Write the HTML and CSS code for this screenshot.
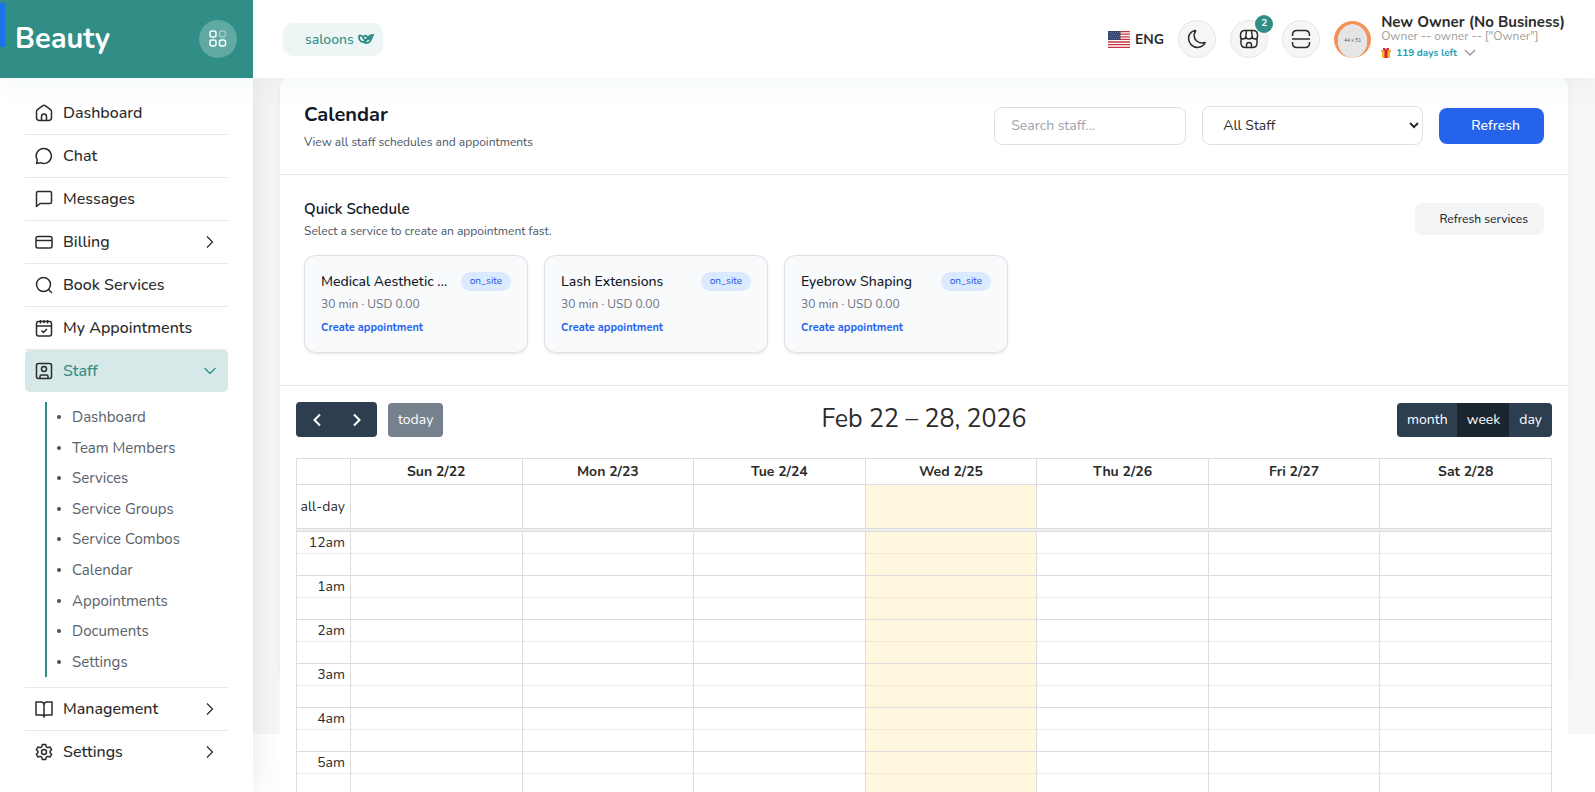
FILE: index.html
```html
<!DOCTYPE html>
<html lang="en">
<head>
    <meta charset="UTF-8">
    <meta name="viewport" content="width=device-width, initial-scale=1.0">
    <title>Calendar</title>
    <link rel="stylesheet" href="styles.css">
</head>
<body>
    <div class="loader-bar"></div>

    <!-- Header -->
    <header class="header">
        <div class="brand">
            <a href="#" class="brand-name">Beauty</a>
            <button type="button" class="toggle-btn" aria-label="Toggle sidebar">
                <svg width="20" height="20" viewBox="0 0 20 20" fill="none" stroke="#fff" stroke-width="1.5">
                    <rect x="2" y="2" width="6" height="6" rx="2"/>
                    <rect x="11.500" y="2" width="6" height="6" rx="2" opacity="0.4"/>
                    <rect x="2" y="11" width="6" height="6" rx="2"/>
                    <rect x="11.500" y="11" width="6" height="6" rx="2"/>
                </svg>
            </button>
        </div>
        <div class="topbar">
            <a href="#" class="saloons">saloons
                <svg width="16" height="12" viewBox="0 0 16 12" fill="none" stroke="#308e87">
                    <path d="M1 2.500c1.500-.5 3 0 4 2l3 4M1 2.500C.8 6 2 9 5 9c2.500 0 3.500-2 4.500-4" stroke-width="1.800"/>
                    <path d="M5.500 3.500c1.500-1 3-.8 4 .5M6 9c1.500 1.500 5 1.500 6.500-1.500L15 2c-2 0-4 .8-5.500 3.500L7 9" stroke-width="1.800"/>
                    <path d="M10 6l4-3.500-2 4.500z" fill="#308e87"/>
                </svg>
            </a>
            <div class="topbar-right">
                <button type="button" class="lang">
                    <svg width="22" height="17" viewBox="0 0 22 17">
                        <rect width="22" height="17" fill="#fff"/>
                        <path d="M0 .6h22M0 3.200h22M0 5.800h22M0 8.400h22M0 11h22M0 13.600h22M0 16.300h22" stroke="#c8343f" stroke-width="1.300"/>
                        <rect width="12.500" height="9" fill="#34446f"/>
                        <path d="M1 1.500h11M2 3.500h10M1 5.500h11M2 7.500h10" stroke="#7f8cb5" stroke-width=".6" stroke-dasharray="1 1"/>
                    </svg>
                    ENG
                </button>
                <button type="button" class="icon-btn" aria-label="Dark mode">
                    <svg width="20" height="20" viewBox="0 0 20 20"><path d="M8 1.500C3.800 2.600 1.500 6 1.600 9.800 1.800 14.600 5.600 18.400 10.400 18.400c3.400 0 6.300-1.900 7.800-4.700-.8-.5-1.900.2-3.400.2-4.300 0-7.700-3.400-7.700-7.700 0-1.700.9-3.100 1.500-4.100.2-.4-.1-.7-.6-.6z"/></svg>
                </button>
                <button type="button" class="icon-btn" aria-label="Shops">
                    <svg width="20" height="20" viewBox="0 0 20 20"><path d="M7.500 1.500h5M5.500 1.500C3 1.500 1.800 3 1.500 5.500v2c0 1.500 1 2.500 2.500 2.500s2.800-1 2.800-2.500l.7-6h-2M7.500 1.500l-.7 6c0 1.500 1.400 2.500 3.200 2.500s3.200-1 3.200-2.500l-.7-6M12.500 1.500h2c2.500 0 3.700 1.500 4 4v2c0 1.500-1 2.500-2.500 2.500s-2.800-1-2.800-2.500M2 10v4c0 3 1.500 4.500 4.500 4.500h7c3 0 4.500-1.500 4.500-4.500v-4M7.500 18v-2c0-1.500 1-2.500 2.500-2.500s2.500 1 2.500 2.500v2"/></svg>
                    <span class="badge">2</span>
                </button>
                <button type="button" class="icon-btn" aria-label="Full screen">
                    <svg width="20" height="20" viewBox="0 0 20 20"><path d="M1.500 7V6c0-3 1.500-4.500 4.500-4.500h8c3 0 4.500 1.500 4.500 4.500v1M1.500 13v1c0 3 1.500 4.500 4.500 4.500h8c3 0 4.500-1.500 4.500-4.500v-1M1 10h18"/></svg>
                </button>
                <div class="profile">
                    <span class="avatar">44 x 51</span>
                    <div class="profile-info">
                        <div class="profile-name">New Owner (No Business)</div>
                        <div class="profile-role">Owner -- owner -- ["Owner"]</div>
                        <div class="profile-trial">
                            <svg width="10" height="10" viewBox="0 0 10 10">
                                <path d="M1 3h8v7H1z" fill="#f5b92c"/>
                                <path d="M0 2h10v2H0z" fill="#f0a52a"/>
                                <path d="M2 0h2l1 1.500L6 0h2v2H6.500v8h-3V2H2z" fill="#d4213d"/>
                            </svg>
                            119 days left
                            <svg class="caret" width="12" height="8" viewBox="0 0 12 8"><path d="M1 1l5 5 5-5" fill="none" stroke="#a19d9a" stroke-width="1.500"/></svg>
                        </div>
                    </div>
                </div>
            </div>
        </div>
    </header>

    <div class="page">
        <!-- Sidebar -->
        <nav class="sidebar">
            <ul class="menu">
                <li><a href="#"><svg viewBox="0 0 18 18"><path d="M1.500 7.500v6c0 2 1 3 3 3h9c2 0 3-1 3-3v-6c0-.8-.3-1.300-1-1.800l-5-3.900c-1-.8-2-.8-3 0l-5 3.900c-.7.500-1 1-1 1.800zM6.500 16.500v-4c0-1.500 1-2.500 2.500-2.500s2.500 1 2.500 2.500v4"/></svg>Dashboard</a></li>
                <li><a href="#"><svg viewBox="0 0 18 18"><path d="M9 1.500a7.500 7.500 0 1 1-3.500 14.200c-1.500.3-3 .8-4 .8.300-1 .8-2.500.6-4A7.500 7.500 0 0 1 9 1.500z"/></svg>Chat</a></li>
                <li><a href="#"><svg viewBox="0 0 18 18"><path d="M3 1.500h12c1 0 1.500.5 1.500 1.500v9c0 1-.5 1.500-1.500 1.500H5l-3.500 3V3c0-1 .5-1.500 1.500-1.500z"/></svg>Messages</a></li>
                <li><a href="#"><svg viewBox="0 0 18 18"><rect x="1" y="3.500" width="16" height="11.500" rx="2"/><path d="M1 7.500h16"/></svg>Billing<svg class="arrow" viewBox="0 0 18 18"><path d="M6 3.500L11.500 9 6 14.500"/></svg></a></li>
                <li><a href="#"><svg viewBox="0 0 18 18"><circle cx="8.500" cy="8.500" r="7"/><path d="M13.500 13.500l3.500 3.500"/></svg>Book Services</a></li>
                <li><a href="#"><svg viewBox="0 0 18 18"><rect x="1.500" y="2.500" width="15" height="14.500" rx="2"/><path d="M1.500 7h15M5.500 1v3.500M12.500 1v3.500M9 1v3M6.500 11.500l2 2 3.500-3.500"/></svg>My Appointments</a></li>
                <li class="open">
                    <a href="#" class="active"><svg viewBox="0 0 18 18"><rect x="1.500" y="1.500" width="15" height="15" rx="2"/><circle cx="9" cy="7" r="2.500"/><path d="M5 16v-1.500c0-1 .6-1.500 1.500-1.500h5c.9 0 1.500.5 1.500 1.500V16"/></svg>Staff<svg class="arrow" viewBox="0 0 18 18"><path d="M3.500 6L9 11.500 14.500 6"/></svg></a>
                    <ul class="submenu">
                        <li><a href="#">Dashboard</a></li>
                        <li><a href="#">Team Members</a></li>
                        <li><a href="#">Services</a></li>
                        <li><a href="#">Service Groups</a></li>
                        <li><a href="#">Service Combos</a></li>
                        <li><a href="#">Calendar</a></li>
                        <li><a href="#">Appointments</a></li>
                        <li><a href="#">Documents</a></li>
                        <li><a href="#">Settings</a></li>
                    </ul>
                </li>
                <li><a href="#"><svg viewBox="0 0 18 18"><path d="M1 2h5c2 0 3 1 3 3v12c0-1.500-1-2-2.500-2H1zM17 2h-5c-2 0-3 1-3 3v12c0-1.500 1-2 2.500-2H17z"/></svg>Management<svg class="arrow" viewBox="0 0 18 18"><path d="M6 3.500L11.500 9 6 14.500"/></svg></a></li>
                <li><a href="#"><svg viewBox="0 0 18 18"><path d="M7.300 1.500h3.400l.5 2.300 1.600.9 2.200-.8 1.700 2.900-1.700 1.500v1.400l1.700 1.500-1.700 2.900-2.200-.8-1.600.9-.5 2.300H7.300l-.5-2.300-1.600-.9-2.200.8-1.700-2.900L3 9.700V8.300L1.300 6.800 3 3.900l2.200.8 1.600-.9z"/><circle cx="9" cy="9" r="2.500"/></svg>Settings<svg class="arrow" viewBox="0 0 18 18"><path d="M6 3.500L11.500 9 6 14.500"/></svg></a></li>
            </ul>
        </nav>

        <!-- Content -->
        <main class="content">
            <div class="card">
                <div class="card-head">
                    <div>
                        <h1>Calendar</h1>
                        <p>View all staff schedules and appointments</p>
                    </div>
                    <form class="filters">
                        <input type="text" class="search" placeholder="Search staff..." aria-label="Search staff">
                        <select class="staff-select" aria-label="Staff">
                            <option>All Staff</option>
                        </select>
                        <button type="button" class="btn-primary">Refresh</button>
                    </form>
                </div>

                <section class="quick">
                    <div class="quick-head">
                        <div>
                            <h2>Quick Schedule</h2>
                            <p>Select a service to create an appointment fast.</p>
                        </div>
                        <button type="button" class="btn-light">Refresh services</button>
                    </div>
                    <div class="services">
                        <div class="service">
                            <div class="service-top"><h3>Medical Aesthetic ...</h3><span class="pill">on_site</span></div>
                            <p>30 min · USD 0.00</p>
                            <a href="#">Create appointment</a>
                        </div>
                        <div class="service">
                            <div class="service-top"><h3>Lash Extensions</h3><span class="pill">on_site</span></div>
                            <p>30 min · USD 0.00</p>
                            <a href="#">Create appointment</a>
                        </div>
                        <div class="service">
                            <div class="service-top"><h3>Eyebrow Shaping</h3><span class="pill">on_site</span></div>
                            <p>30 min · USD 0.00</p>
                            <a href="#">Create appointment</a>
                        </div>
                    </div>
                </section>

                <section class="calendar">
                    <div class="toolbar">
                        <div class="toolbar-left">
                            <div class="btn-group nav-group">
                                <button type="button" aria-label="Previous"><svg width="10" height="14" viewBox="0 0 10 14"><path d="M8 1.500L2.500 7 8 12.500"/></svg></button>
                                <button type="button" aria-label="Next"><svg width="10" height="14" viewBox="0 0 10 14"><path d="M2 1.500L7.500 7 2 12.500"/></svg></button>
                            </div>
                            <button type="button" class="btn-today" disabled>today</button>
                        </div>
                        <h2>Feb 22 – 28, 2026</h2>
                        <div class="toolbar-right">
                            <div class="btn-group">
                                <button type="button">month</button>
                                <button type="button" class="active">week</button>
                                <button type="button">day</button>
                            </div>
                        </div>
                    </div>

                    <table class="week">
                        <colgroup>
                            <col class="axis"><col><col><col><col class="today"><col><col><col>
                        </colgroup>
                        <thead>
                            <tr><th></th><th>Sun 2/22</th><th>Mon 2/23</th><th>Tue 2/24</th><th>Wed 2/25</th><th>Thu 2/26</th><th>Fri 2/27</th><th>Sat 2/28</th></tr>
                        </thead>
                        <tbody>
                            <tr class="all-day"><td>all-day</td><td></td><td></td><td></td><td></td><td></td><td></td><td></td></tr>
                            <tr class="divider"><td colspan="8"></td></tr>
                            <tr class="hour"><td>12am</td><td></td><td></td><td></td><td></td><td></td><td></td><td></td></tr>
                            <tr class="half"><td></td><td></td><td></td><td></td><td></td><td></td><td></td><td></td></tr>
                            <tr class="hour"><td>1am</td><td></td><td></td><td></td><td></td><td></td><td></td><td></td></tr>
                            <tr class="half"><td></td><td></td><td></td><td></td><td></td><td></td><td></td><td></td></tr>
                            <tr class="hour"><td>2am</td><td></td><td></td><td></td><td></td><td></td><td></td><td></td></tr>
                            <tr class="half"><td></td><td></td><td></td><td></td><td></td><td></td><td></td><td></td></tr>
                            <tr class="hour"><td>3am</td><td></td><td></td><td></td><td></td><td></td><td></td><td></td></tr>
                            <tr class="half"><td></td><td></td><td></td><td></td><td></td><td></td><td></td><td></td></tr>
                            <tr class="hour"><td>4am</td><td></td><td></td><td></td><td></td><td></td><td></td><td></td></tr>
                            <tr class="half"><td></td><td></td><td></td><td></td><td></td><td></td><td></td><td></td></tr>
                            <tr class="hour"><td>5am</td><td></td><td></td><td></td><td></td><td></td><td></td><td></td></tr>
                            <tr class="half"><td></td><td></td><td></td><td></td><td></td><td></td><td></td><td></td></tr>
                        </tbody>
                    </table>
                </section>
            </div>
        </main>
    </div>
</body>
</html>
```

FILE: styles.css
```css
* {
    box-sizing: border-box;
}
body {
    margin: 0;
    height: 100vh;
    display: flex;
    flex-direction: column;
    overflow: hidden;
    font-family: Nunito, "Open Sans", sans-serif;
    font-size: 14px;
    color: #2b2b2b;
    background: #fff;
}
h1, h2, h3, p, ul {
    margin: 0;
    padding: 0;
}
ul {
    list-style: none;
}
a {
    color: inherit;
    text-decoration: none;
}
button, input, select {
    font: inherit;
    color: inherit;
}
button {
    border: none;
    padding: 0;
    cursor: pointer;
}
.loader-bar {
    position: absolute;
    top: 3px;
    left: 0;
    width: 5px;
    height: 44px;
    background: #1a73e8;
    z-index: 10;
}

/* Header */
.header {
    position: relative;
    z-index: 5;
    flex: none;
    display: flex;
    height: 78px;
    background: #fff;
    box-shadow: 0 4px 30px rgba(48, 142, 135, 0.06);
}
.brand {
    width: 253px;
    padding: 0 16px 0 15px;
    display: flex;
    align-items: center;
    justify-content: space-between;
    background: #308e87;
}
.brand-name {
    color: #fff;
    font-size: 29px;
    font-weight: 700;
    line-height: 36px;
}
.toggle-btn {
    width: 38px;
    height: 38px;
    border-radius: 50%;
    display: flex;
    align-items: center;
    justify-content: center;
    background: rgba(255, 255, 255, 0.24);
}
.topbar {
    flex: 1;
    display: flex;
    align-items: center;
    justify-content: space-between;
    padding: 0 30px;
}
.saloons {
    display: flex;
    align-items: center;
    gap: 4px;
    height: 33px;
    padding: 0 9px 0 22px;
    border-radius: 10px;
    background: #edf6f5;
    color: #308e87;
    font-weight: 500;
}
.topbar-right {
    display: flex;
    align-items: center;
    gap: 14px;
}
.lang {
    display: flex;
    align-items: center;
    gap: 5px;
    background: none;
    font-weight: 700;
}
.icon-btn {
    position: relative;
    width: 38px;
    height: 38px;
    border-radius: 50%;
    border: 1px solid #e6e5e4;
    background: #f7f6f5;
    display: flex;
    align-items: center;
    justify-content: center;
}
.icon-btn svg {
    fill: none;
    stroke: #2b2b2b;
    stroke-width: 1.5;
    stroke-linejoin: round;
}
.badge {
    position: absolute;
    top: -6px;
    right: -6px;
    width: 18px;
    height: 18px;
    border-radius: 50%;
    background: #308e87;
    color: #fff;
    font-size: 10px;
    font-weight: 700;
    line-height: 17px;
}
.profile {
    display: flex;
    align-items: center;
    gap: 10px;
}
.avatar {
    width: 37px;
    height: 37px;
    border-radius: 50%;
    background: radial-gradient(ellipse 15px 17px at 50% 20px, #e5e5e5 97%, #f4925a);
    color: #555;
    font-size: 5px;
    line-height: 40px;
    text-align: center;
}
.profile-info {
    padding-bottom: 2px;
}
.profile-name {
    font-size: 15px;
    font-weight: 700;
    line-height: 14px;
}
.profile-role {
    color: #a19d9a;
    font-size: 12px;
    line-height: 14px;
}
.profile-trial {
    display: flex;
    align-items: center;
    gap: 5px;
    padding-top: 2px;
    color: #16a1b5;
    font-size: 10px;
    font-weight: 700;
    line-height: 16px;
}
.caret {
    margin-left: 2px;
}

/* Sidebar */
.page {
    flex: 1;
    display: flex;
    min-height: 0;
}
.sidebar {
    position: relative;
    z-index: 2;
    flex: none;
    width: 253px;
    padding: 14px 25px;
    background: #fff;
    box-shadow: 0 0 30px rgba(60, 60, 60, 0.12);
}
.menu > li {
    border-bottom: 1px solid #e8e8e8;
}
.menu > li:last-child {
    border-bottom: none;
}
.menu > li > a {
    display: flex;
    align-items: center;
    height: 42px;
    padding: 0 9px 0 10px;
    border-radius: 5px;
    font-size: 16px;
    font-weight: 500;
}
.menu svg {
    width: 18px;
    height: 18px;
    margin-right: 10px;
    fill: none;
    stroke: #2b2b2b;
    stroke-width: 1.5;
    stroke-linejoin: round;
}
.menu .arrow {
    margin: 0 0 0 auto;
    stroke-width: 1.2;
}
.menu > li > .active {
    background: #d6e8e7;
    color: #308e87;
}
.active .arrow {
    stroke: #308e87;
}
.menu > .open {
    padding-bottom: 10px;
}
.submenu {
    display: grid;
    grid-auto-rows: 1fr;
    height: 275px;
    margin: 10px 0 0 20px;
    padding-left: 10px;
    border-left: 2px solid #308e87;
    color: #59616a;
    font-size: 15px;
}
.submenu a {
    display: flex;
    align-items: center;
    gap: 11px;
    height: 100%;
}
.submenu a::before {
    content: "";
    width: 4px;
    height: 4px;
    border-radius: 50%;
    background: #4b5259;
}

/* Content */
.content {
    flex: 1;
    min-width: 0;
    height: calc(100% - 58px);
    padding: 0 27px;
    background: #f7f6f4;
}
.card {
    height: calc(100% - 57px);
    border-radius: 8px;
    background: #fff;
    box-shadow: 0 2px 6px rgba(0, 0, 0, 0.06);
}
.card-head {
    display: flex;
    align-items: center;
    justify-content: space-between;
    height: 97px;
    padding: 0 24px;
    border-bottom: 1px solid #e5e7eb;
}
.card-head h1 {
    color: #111827;
    font-size: 20px;
    font-weight: 700;
    line-height: 28px;
}
.card-head p {
    margin-top: 4px;
    color: #4b5563;
    font-size: 12px;
    line-height: 18px;
}
.filters {
    display: flex;
    align-items: center;
    gap: 16px;
    padding-bottom: 1px;
}
.search {
    width: 192px;
    height: 38px;
    padding: 0 16px;
    border: 1px solid #dcdfe5;
    border-radius: 8px;
}
.search::placeholder {
    color: #9ca3af;
}
.staff-select {
    width: 221px;
    height: 39px;
    padding: 0 0 0 16px;
    border: 1px solid #dcdfe5;
    border-radius: 8px;
    background: #fff;
}
.btn-primary {
    height: 36px;
    padding: 0 24px 0 32px;
    border-radius: 8px;
    background: #2563eb;
    color: #fff;
    font-weight: 500;
}
.quick {
    padding: 24px 24px 32px;
    border-bottom: 1px solid #e5e7eb;
    background: #fff;
}
.quick-head {
    display: flex;
    align-items: center;
    justify-content: space-between;
    margin-bottom: 16px;
}
.quick-head h2 {
    color: #111827;
    font-size: 15px;
    font-weight: 600;
    line-height: 20px;
}
.quick-head p {
    margin-top: 4px;
    color: #4b5563;
    font-size: 12px;
    line-height: 16px;
}
.btn-light {
    height: 32px;
    padding: 0 16px 0 24px;
    border-radius: 8px;
    background: #f3f4f6;
    color: #1f2937;
    font-size: 12px;
    font-weight: 500;
}
.services {
    display: flex;
    gap: 16px;
}
.service {
    width: 224px;
    padding: 16px;
    border: 1px solid #dde1e7;
    border-radius: 12px;
    background: #f8fafc;
    box-shadow: 0 1px 3px rgba(0, 0, 0, 0.1);
}
.service-top {
    display: flex;
    align-items: flex-start;
    justify-content: space-between;
    gap: 8px;
}
.service h3 {
    color: #111827;
    font-size: 14px;
    font-weight: 500;
    line-height: 20px;
    white-space: nowrap;
}
.pill {
    padding: 0 9px;
    border-radius: 10px;
    background: #dbeafe;
    color: #1d4ed8;
    font-size: 10px;
    line-height: 19px;
}
.service p {
    margin: 4px 0 8px;
    color: #6b7280;
    font-size: 12px;
    line-height: 16px;
}
.service a {
    display: block;
    color: #2563eb;
    font-size: 11px;
    font-weight: 700;
    line-height: 16px;
}

/* Calendar */
.calendar {
    padding: 16px;
    background: #fff;
}
.toolbar {
    display: flex;
    align-items: flex-end;
    height: 35px;
    margin-bottom: 21px;
}
.toolbar h2 {
    font-size: 25px;
    font-weight: 400;
    line-height: 36px;
}
.toolbar-left, .toolbar-right {
    flex: 1;
    display: flex;
    align-items: flex-end;
    gap: 11px;
}
.toolbar-right {
    justify-content: flex-end;
}
.btn-group {
    display: flex;
    overflow: hidden;
    border-radius: 4px;
}
.btn-group button {
    height: 34px;
    padding: 0 10px;
    background: #2c3e50;
    color: #fff;
}
.btn-group button + button {
    margin-left: -1px;
}
.btn-group .active {
    background: #1a252f;
}
.nav-group button {
    display: flex;
    align-items: center;
    justify-content: center;
    width: 41px;
    height: 35px;
    padding-top: 3px;
}
.nav-group svg {
    fill: none;
    stroke: #fff;
    stroke-width: 2;
}
.btn-today {
    height: 34px;
    padding: 0 10px;
    border-radius: 4px;
    background: #76818d;
    color: #fff;
}
.btn-group button, .btn-today {
    padding-bottom: 2px;
}
.week {
    width: 100%;
    table-layout: fixed;
    border-collapse: collapse;
}
.week .axis {
    width: 54px;
}
.week .today {
    background: #fff8df;
}
.week th, .week td {
    height: 22px;
    padding: 0;
    border: 1px solid #ddd;
    line-height: 20px;
}
.week th {
    height: 26px;
    background: #fff;
    font-weight: 700;
}
.week td:first-child {
    padding-right: 5px;
    text-align: right;
}
.week .all-day td {
    height: 44px;
}
.week .divider td {
    height: 3px;
    padding: 0;
    background: #eee;
    line-height: 0;
}
.week .hour td {
    border-bottom: none;
}
.week .half td {
    border-top-style: dotted;
}
```
